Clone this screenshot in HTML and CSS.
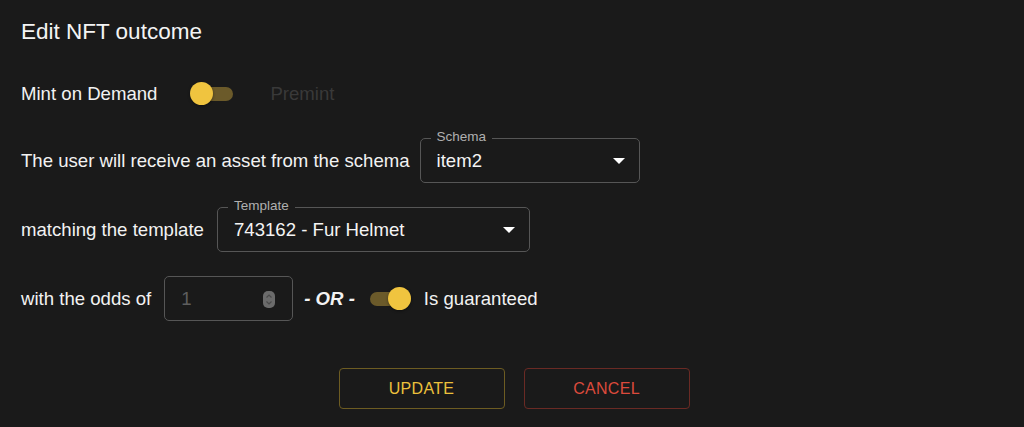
FILE: index.html
```html
<!DOCTYPE html>
<html lang="en">
<head>
  <meta charset="UTF-8" />
  <meta name="viewport" content="width=device-width, initial-scale=1.0" />
  <title>Edit NFT outcome</title>
  <link rel="stylesheet" href="styles.css">
</head>
<body>
  <div class="dialog">
    <h2 class="title">Edit NFT outcome</h2>

    <div class="row row-mint">
      <span>Mint on Demand</span>
      <span class="switch"><span class="track"></span><span class="thumb"></span></span>
      <span class="muted">Premint</span>
    </div>

    <div class="row row-schema">
      <span>The user will receive an asset from the schema</span>
      <div class="field select schema">
        <span class="legend">Schema</span>
        <span class="value">item2</span>
        <svg class="caret" width="12" height="6" viewBox="0 0 12 6"><path d="M0 0h12L6 6z" fill="#fff"/></svg>
      </div>
    </div>

    <div class="row row-template">
      <span>matching the template</span>
      <div class="field select template">
        <span class="legend">Template</span>
        <span class="value">743162 - Fur Helmet</span>
        <svg class="caret" width="12" height="6" viewBox="0 0 12 6"><path d="M0 0h12L6 6z" fill="#fff"/></svg>
      </div>
    </div>

    <div class="row row-odds">
      <span>with the odds of</span>
      <div class="field odds">
        <span class="value disabled">1</span>
        <svg class="spin" width="12" height="17" viewBox="0 0 12 17">
          <rect x="0" y="0" width="12" height="17" rx="5" fill="#6b6b6b"/>
          <path d="M3.5 6.5L6 4l2.5 2.5M3.5 10.5L6 13l2.5-2.5" stroke="#4a4a4a" stroke-width="1.2" fill="none"/>
        </svg>
      </div>
      <span class="or">- OR -</span>
      <span class="switch on"><span class="track"></span><span class="thumb"></span></span>
      <span class="label">Is guaranteed</span>
    </div>

    <div class="actions">
      <button class="btn update">UPDATE</button>
      <button class="btn cancel">CANCEL</button>
    </div>
  </div>
</body>
</html>
```

FILE: styles.css
```css
* {
  margin: 0;
  padding: 0;
  box-sizing: border-box;
}

body {
  font-family: 'Liberation Sans', Arial, sans-serif;
  background: #1a1a1a;
  color: #f2f2f2;
  width: 1024px;
  height: 427px;
  overflow: hidden;
}

.dialog {
  padding: 20px 21px 0;
}

.title {
  font-size: 22.5px;
  font-weight: normal;
  line-height: 24px;
  color: #f4f4f4;
}

.row {
  display: flex;
  align-items: center;
  font-size: 18.6px;
}

.row-mint {
  margin-top: 38px;
  height: 24px;
}

.row-schema {
  margin-top: 32px;
  height: 45px;
}

.row-template {
  margin-top: 24px;
  height: 45px;
}

.row-odds {
  margin-top: 24px;
  height: 45px;
}

.muted {
  color: #393939;
  margin-left: 36px;
}

.switch {
  position: relative;
  width: 44px;
  height: 24px;
  margin-left: 33px;
  display: inline-block;
}

.switch .track {
  position: absolute;
  left: 2px;
  top: 5px;
  width: 41px;
  height: 14px;
  border-radius: 7px;
  background: #6b5a2a;
}

.switch .thumb {
  position: absolute;
  left: 0;
  top: 0;
  width: 23px;
  height: 23px;
  border-radius: 50%;
  background: #f0c43f;
  box-shadow: 0 1px 3px rgba(0, 0, 0, 0.4);
}

.switch.on {
  margin-left: 13px;
}

.switch.on .thumb {
  left: 20px;
}

.label {
  margin-left: 12px;
}

.field {
  position: relative;
  height: 45px;
  border: 1px solid #565656;
  border-radius: 5px;
  display: flex;
  align-items: center;
  padding-left: 16px;
}

.select .value {
  font-size: 18.6px;
  color: #f4f4f4;
}

.legend {
  position: absolute;
  top: -10px;
  left: 10px;
  padding: 0 6px;
  background: #1a1a1a;
  font-size: 13.5px;
  line-height: 16px;
  color: #b0b0b0;
}

.caret {
  position: absolute;
  right: 14px;
  top: 19px;
}

.schema {
  width: 220px;
  margin-left: 10px;
}

.template {
  width: 313px;
  margin-left: 13px;
}

.odds {
  width: 129px;
  margin-left: 13px;
}

.value.disabled {
  color: #5e5e5e;
  font-size: 18.6px;
}

.spin {
  position: absolute;
  right: 17px;
  top: 14px;
}

.or {
  font-weight: bold;
  font-style: italic;
  margin-left: 11px;
}

.actions {
  display: flex;
  justify-content: center;
  gap: 19px;
  margin-top: 47px;
  padding-left: 4px;
}

.btn {
  width: 166px;
  height: 41px;
  background: transparent;
  border-radius: 4px;
  font-family: 'Liberation Sans', Arial, sans-serif;
  font-size: 16px;
  letter-spacing: 0.3px;
}

.update {
  border: 1px solid #6d5c22;
  color: #ecc13c;
}

.cancel {
  border: 1px solid #6a2a24;
  color: #dc4a3c;
}
```
